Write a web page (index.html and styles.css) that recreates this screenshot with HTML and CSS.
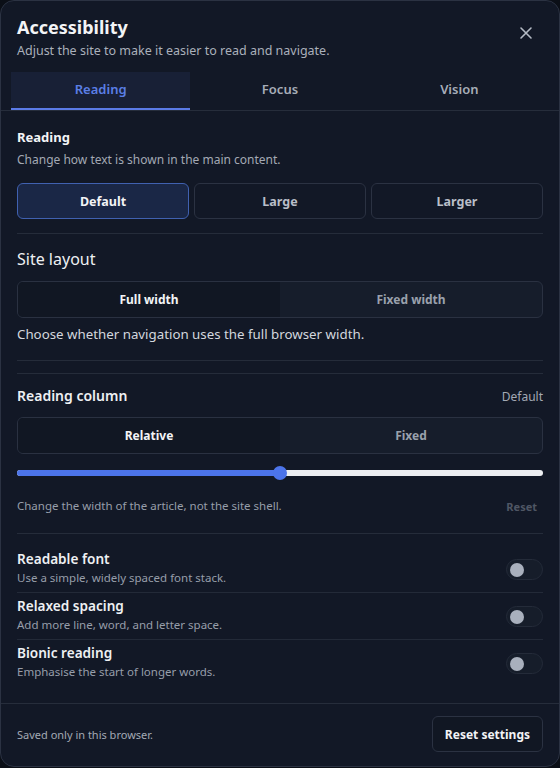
FILE: index.html
```html
<!DOCTYPE html>
<html lang="en">
<head>
<meta charset="utf-8">
<title>Accessibility</title>
<link rel="stylesheet" href="styles.css">
</head>
<body>
<div class="panel">
  <header class="head">
    <div class="head-text">
      <h1 class="title">Accessibility</h1>
      <p class="subtitle">Adjust the site to make it easier to read and navigate.</p>
    </div>
    <button class="close" aria-label="Close">
      <svg width="14" height="14" viewBox="0 0 14 14"><path d="M2 2L12 12M12 2L2 12" stroke="currentColor" stroke-width="1.6" stroke-linecap="round"/></svg>
    </button>
  </header>
  <nav class="tabs">
    <div class="tab active">Reading</div>
    <div class="tab">Focus</div>
    <div class="tab">Vision</div>
  </nav>
  <main class="body">
    <section class="sec-reading">
      <h2 class="sec-title">Reading</h2>
      <p class="sec-desc">Change how text is shown in the main content.</p>
      <div class="choices">
        <div class="choice active">Default</div>
        <div class="choice">Large</div>
        <div class="choice">Larger</div>
      </div>
    </section>
    <hr class="rule rule-a">
    <section class="sec-layout">
      <h2 class="layout-title">Site layout</h2>
      <div class="seg">
        <div class="seg-item on">Full width</div>
        <div class="seg-item">Fixed width</div>
      </div>
      <p class="layout-desc">Choose whether navigation uses the full browser width.</p>
    </section>
    <hr class="rule rule-b">
    <hr class="rule rule-c">
    <section class="sec-column">
      <div class="col-head">
        <h2 class="col-title">Reading column</h2>
        <span class="col-value">Default</span>
      </div>
      <div class="seg">
        <div class="seg-item on">Relative</div>
        <div class="seg-item">Fixed</div>
      </div>
      <div class="slider">
        <div class="track"><div class="fill" style="width:50%"></div></div>
        <div class="thumb" style="left:50%"></div>
      </div>
      <div class="col-foot">
        <span class="col-note">Change the width of the article, not the site shell.</span>
        <span class="col-reset">Reset</span>
      </div>
    </section>
    <hr class="rule rule-d">
    <section class="toggles">
      <div class="trow">
        <div class="ttext">
          <div class="tname">Readable font</div>
          <div class="tdesc">Use a simple, widely spaced font stack.</div>
        </div>
        <div class="switch"><span class="knob"></span></div>
      </div>
      <div class="trow">
        <div class="ttext">
          <div class="tname">Relaxed spacing</div>
          <div class="tdesc">Add more line, word, and letter space.</div>
        </div>
        <div class="switch"><span class="knob"></span></div>
      </div>
      <div class="trow last">
        <div class="ttext">
          <div class="tname">Bionic reading</div>
          <div class="tdesc">Emphasise the start of longer words.</div>
        </div>
        <div class="switch"><span class="knob"></span></div>
      </div>
    </section>
  </main>
  <footer class="foot">
    <span class="foot-note">Saved only in this browser.</span>
    <button class="reset-btn">Reset settings</button>
  </footer>
</div>
</body>
</html>
```
FILE: styles.css
```css
* { box-sizing: border-box; }
html, body { margin: 0; padding: 0; }
body {
  background: #0b0f17;
  font-family: "Noto Sans", "Open Sans", sans-serif;
  color: #e5e7eb;
  width: 560px;
  height: 768px;
  overflow: hidden;
}
.panel {
  width: 560px;
  height: 767px;
  background: #121826;
  border: 1px solid #2b3242;
  border-radius: 14px;
  display: flex;
  flex-direction: column;
  overflow: hidden;
}
.head {
  display: flex;
  justify-content: space-between;
  align-items: flex-start;
  padding: 14px 16px 0 16px;
}
.title {
  margin: 0;
  font-size: 18px;
  line-height: 24px;
  font-weight: 700;
  color: #f3f4f6;
}
.subtitle {
  margin: 3px 0 0;
  font-size: 12.5px;
  line-height: 18px;
  color: #aab0bb;
}
.close {
  background: none;
  border: 0;
  padding: 0;
  margin: 11px 10px 0 0;
  width: 14px;
  height: 14px;
  color: #b4bac4;
  display: flex;
}
.tabs {
  display: grid;
  grid-template-columns: repeat(3, 1fr);
  margin-top: 12px;
  padding: 0 10px;
  border-bottom: 1px solid #262d3b;
}
.tab {
  height: 38px;
  display: flex;
  align-items: center;
  justify-content: center;
  padding-bottom: 3px;
  font-size: 13px;
  font-weight: 600;
  color: #a7adb8;
  border-bottom: 2px solid transparent;
}
.tab.active {
  background: #182036;
  color: #5b7fe6;
  border-bottom-color: #5b7be8;
}
.body {
  flex: 1;
  padding: 17px 16px 0;
}
.sec-title {
  margin: 0;
  font-size: 13px;
  line-height: 18px;
  font-weight: 700;
  color: #f3f4f6;
}
.sec-desc {
  margin: 5px 0 0;
  font-size: 12px;
  line-height: 18px;
  color: #a3a9b4;
}
.choices {
  display: grid;
  grid-template-columns: repeat(3, 1fr);
  gap: 5px;
  margin-top: 14px;
}
.choice {
  height: 36px;
  border: 1px solid #2b3242;
  border-radius: 6px;
  display: flex;
  align-items: center;
  justify-content: center;
  font-size: 12.5px;
  font-weight: 700;
  color: #b9bec8;
}
.choice.active {
  background: #1a2746;
  border-color: #4061b0;
  color: #f3f4f6;
}
.rule {
  border: 0;
  height: 1px;
  background: #252c3a;
  margin: 0;
}
.rule-a { margin-top: 14px; }
.layout-title {
  margin: 14px 0 0;
  font-size: 16px;
  line-height: 22px;
  font-weight: 400;
  color: #eef0f3;
}
.seg {
  display: grid;
  grid-template-columns: 1fr 1fr;
  height: 37px;
  margin-top: 11px;
  border: 1px solid #2a3141;
  border-radius: 6px;
  background: #161d2b;
  overflow: hidden;
}
.seg-item {
  display: flex;
  align-items: center;
  justify-content: center;
  font-size: 12px;
  font-weight: 700;
  color: #9aa1ad;
}
.seg-item.on {
  background: #111723;
  color: #f3f4f6;
}
.layout-desc {
  margin: 7px 0 0;
  font-size: 13.3px;
  line-height: 18px;
  color: #d3d7de;
}
.rule-b { margin-top: 17px; }
.rule-c { margin-top: 12px; }
.col-head {
  display: flex;
  justify-content: space-between;
  align-items: center;
  margin-top: 12px;
}
.col-title {
  margin: 0;
  font-size: 14px;
  line-height: 20px;
  font-weight: 600;
  color: #eef0f3;
}
.col-value {
  font-size: 12px;
  color: #a3a9b4;
}
.slider {
  position: relative;
  height: 16px;
  margin-top: 11px;
}
.track {
  position: absolute;
  left: 0;
  right: 0;
  top: 5px;
  height: 6px;
  border-radius: 3px;
  background: #eceef1;
  overflow: hidden;
}
.fill {
  height: 100%;
  background: #4c74ea;
}
.thumb {
  position: absolute;
  top: 1px;
  width: 14px;
  height: 14px;
  margin-left: -7px;
  border-radius: 50%;
  background: #4c74ea;
}
.col-foot {
  display: flex;
  justify-content: space-between;
  align-items: center;
  margin-top: 17px;
  padding-right: 6px;
}
.col-note {
  font-size: 11.5px;
  line-height: 16px;
  color: #979eaa;
}
.col-reset {
  font-size: 11px;
  font-weight: 700;
  color: #4f5664;
}
.rule-d { margin-top: 19px; }
.toggles { margin-top: 12px; }
.trow {
  display: flex;
  justify-content: space-between;
  align-items: center;
  padding: 3px 0 6px;
  border-bottom: 1px solid #232a38;
}
.trow.last { border-bottom: 0; }
.tname {
  font-size: 13.6px;
  line-height: 20px;
  font-weight: 600;
  color: #eef0f3;
}
.tdesc {
  margin-top: 1px;
  font-size: 11.5px;
  line-height: 16px;
  color: #979eaa;
}
.switch {
  width: 37px;
  height: 21px;
  border-radius: 11px;
  background: #161d2a;
  border: 1px solid #242b39;
  display: flex;
  align-items: center;
  padding-left: 3px;
  margin-top: 4px;
}
.knob {
  width: 14px;
  height: 14px;
  border-radius: 50%;
  background: #a9b0bd;
}
.foot {
  display: flex;
  justify-content: space-between;
  align-items: center;
  border-top: 1px solid #262d3b;
  padding: 12px 16px 14px;
}
.foot-note {
  font-size: 11px;
  color: #a3a9b4;
}
.reset-btn {
  height: 36px;
  padding: 0 12px;
  background: #111723;
  border: 1px solid #2b3242;
  border-radius: 6px;
  font-family: inherit;
  font-size: 12px;
  font-weight: 700;
  color: #f3f4f6;
}
```
